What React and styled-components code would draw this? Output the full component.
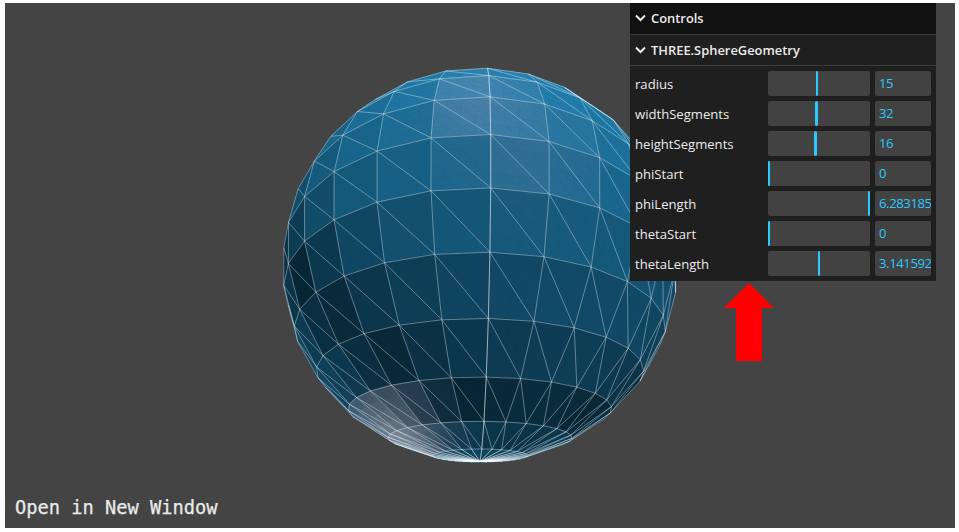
import React, { useMemo } from "react";
import styled, { createGlobalStyle } from "styled-components";

const Global = createGlobalStyle`
  html, body { margin: 0; padding: 0; background: #fff; }
  body { padding: 3px 0 0 5px; font-family: "Open Sans", "Noto Sans", sans-serif; }
`;

const Stage = styled.div`
  position: relative;
  width: 950px;
  height: 525px;
  background: #444444;
  overflow: hidden;
`;

const Canvas = styled.svg`
  display: block;
  width: 950px;
  height: 525px;
`;

const Panel = styled.div`
  position: absolute;
  top: 0;
  right: 19px;
  width: 306px;
  background: #1f1f1f;
  color: #ebebeb;
  font-family: "Open Sans", "Noto Sans", sans-serif;
  font-size: 13.1px;
`;

const TitleBar = styled.div`
  display: flex;
  align-items: center;
  gap: 5px;
  height: 30px;
  padding-left: 5px;
  padding-bottom: ${(p) => (p.$root ? "1px" : "0")};
  font-weight: 600;
  font-size: 12.9px;
  background: ${(p) => (p.$root ? "#111111" : "#1f1f1f")};
  border-bottom: 1px solid #3a3a3a;
`;

const Chevron = styled.svg`
  width: 11px;
  height: 8px;
  flex: none;
`;

const Rows = styled.div`
  display: flex;
  flex-direction: column;
  gap: 5px;
  padding: 5px;
`;

const Row = styled.div`
  display: grid;
  grid-template-columns: 128px 102px 56px;
  column-gap: 5px;
  height: 25px;
  align-items: center;
`;

const Label = styled.span`
  white-space: nowrap;
`;

const Track = styled.div`
  position: relative;
  height: 25px;
  background: #424242;
  border-radius: 2px;
`;

const Handle = styled.div`
  position: absolute;
  top: 0;
  bottom: 0;
  width: 2.5px;
  background: #2cc9ff;
  border-radius: 2px;
`;

const NumberBox = styled.div`
  height: 25px;
  line-height: 25px;
  padding-left: 4px;
  background: #424242;
  border-radius: 2px;
  color: #2cc9ff;
  letter-spacing: -0.4px;
  overflow: hidden;
  white-space: nowrap;
`;

const OpenLink = styled.div`
  position: absolute;
  left: 10px;
  bottom: 8px;
  font-family: "DejaVu Sans Mono", monospace;
  font-size: 18.7px;
  line-height: 24px;
  color: #ebebeb;
  -webkit-text-stroke: 0.25px #ebebeb;
`;

const Arrow = styled.svg`
  position: absolute;
  left: 719px;
  top: 280px;
  width: 50px;
  height: 78px;
`;

const TAU = Math.PI * 2;
const rows = [
  ["radius", 15, 1, 30],
  ["widthSegments", 32, 3, 64],
  ["heightSegments", 16, 2, 32],
  ["phiStart", 0, 0, TAU],
  ["phiLength", TAU, 0, TAU],
  ["thetaStart", 0, 0, TAU],
  ["thetaLength", Math.PI, 0, TAU],
];

const toLin = (c) => {
  const v = c / 255;
  return v <= 0.04045 ? v / 12.92 : Math.pow((v + 0.055) / 1.055, 2.4);
};
const toS = (v) => {
  const c = Math.min(1, Math.max(0, v));
  const s = c <= 0.0031308 ? c * 12.92 : 1.055 * Math.pow(c, 1 / 2.4) - 0.055;
  return Math.round(s * 255);
};
const norm = (v) => {
  const l = Math.hypot(v[0], v[1], v[2]);
  return [v[0] / l, v[1] / l, v[2] / l];
};
const dot = (a, b) => a[0] * b[0] + a[1] * b[1] + a[2] * b[2];

const BASE = [21, 98, 137].map(toLin);
const EMIT = [7, 37, 52].map(toLin);
const SPEC = toLin(17);
const LIGHTS = [[0, 200, 0], [100, 200, 100], [-100, -200, -100]].map(norm);
const CAM = [0, 0, 2];
const F = 342.1;
const CX = 475;
const CY = 262.5;
const RX = (-36 * Math.PI) / 180;
const RY = (92 * Math.PI) / 180;
const SUB = 4;

function shade(P, N) {
  const V = norm([CAM[0] - P[0], CAM[1] - P[1], CAM[2] - P[2]]);
  const out = [...EMIT];
  for (const L of LIGHTS) {
    const nl = Math.max(0, dot(N, L));
    if (nl <= 0) continue;
    const H = norm([L[0] + V[0], L[1] + V[1], L[2] + V[2]]);
    const nh = Math.max(0, dot(N, H));
    const vh = Math.max(0, dot(V, H));
    const fr = Math.pow(1 - vh, 5);
    const Fs = SPEC * (1 - fr) + fr;
    const spec = Fs * 0.25 * (1 / Math.PI) * 16 * Math.pow(nh, 30);
    for (let i = 0; i < 3; i++) out[i] += nl * 3 * (BASE[i] / Math.PI + spec);
  }
  return `rgb(${toS(out[0])},${toS(out[1])},${toS(out[2])})`;
}

function buildSphere() {
  const W = 32;
  const H = 16;
  const vert = (ix, iy) => {
    const th = (iy / H) * Math.PI;
    const ph = (ix / W) * TAU;
    const x = -Math.cos(ph) * Math.sin(th);
    const y = Math.cos(th);
    const z = Math.sin(ph) * Math.sin(th);
    const x1 = x * Math.cos(RY) + z * Math.sin(RY);
    const z1 = -x * Math.sin(RY) + z * Math.cos(RY);
    return [x1, y * Math.cos(RX) - z1 * Math.sin(RX), y * Math.sin(RX) + z1 * Math.cos(RX)];
  };
  const proj = (p) => [CX + (F * p[0]) / (2 - p[2]), CY - (F * p[1]) / (2 - p[2])];
  const polys = [];
  const edges = new Map();
  const addEdge = (a, b, pa, pb) => {
    const k = a < b ? `${a}|${b}` : `${b}|${a}`;
    if (!edges.has(k)) edges.set(k, [proj(pa), proj(pb)]);
  };
  const face = (ids) => {
    const [A, B, C] = ids.map(([ix, iy]) => vert(ix, iy));
    const u = [B[0] - A[0], B[1] - A[1], B[2] - A[2]];
    const v = [C[0] - A[0], C[1] - A[1], C[2] - A[2]];
    let N = norm([u[1] * v[2] - u[2] * v[1], u[2] * v[0] - u[0] * v[2], u[0] * v[1] - u[1] * v[0]]);
    const M = [(A[0] + B[0] + C[0]) / 3, (A[1] + B[1] + C[1]) / 3, (A[2] + B[2] + C[2]) / 3];
    if (dot(N, M) < 0) N = N.map((c) => -c);
    const view = [CAM[0] - M[0], CAM[1] - M[1], CAM[2] - M[2]];
    if (dot(N, view) <= 0) return;
    const names = ids.map(([ix, iy]) => (iy === 0 || iy === H ? `p${iy}_${ix}` : `${ix}_${iy}`));
    addEdge(names[0], names[1], A, B);
    addEdge(names[1], names[2], B, C);
    addEdge(names[2], names[0], C, A);
    const at = (i, j) => {
      const k = SUB - i - j;
      return [
        (A[0] * k + B[0] * i + C[0] * j) / SUB,
        (A[1] * k + B[1] * i + C[1] * j) / SUB,
        (A[2] * k + B[2] * i + C[2] * j) / SUB,
      ];
    };
    const sub = (p, q, r) => {
      const c = [(p[0] + q[0] + r[0]) / 3, (p[1] + q[1] + r[1]) / 3, (p[2] + q[2] + r[2]) / 3];
      const col = shade(c, N);
      polys.push({
        pts: [p, q, r].map((x) => proj(x).map((n) => n.toFixed(2)).join(",")).join(" "),
        col,
      });
    };
    for (let i = 0; i < SUB; i++) {
      for (let j = 0; j < SUB - i; j++) {
        sub(at(i, j), at(i + 1, j), at(i, j + 1));
        if (i + j < SUB - 1) sub(at(i + 1, j), at(i + 1, j + 1), at(i, j + 1));
      }
    }
  };
  for (let iy = 0; iy < H; iy++) {
    for (let ix = 0; ix < W; ix++) {
      const a = [ix + 1, iy];
      const b = [ix, iy];
      const c = [ix, iy + 1];
      const d = [ix + 1, iy + 1];
      if (iy !== 0) face([a, b, d]);
      if (iy !== H - 1) face([b, c, d]);
    }
  }
  return { polys, lines: [...edges.values()] };
}

function Sphere() {
  const { polys, lines } = useMemo(buildSphere, []);
  return (
    <Canvas viewBox="0 0 950 525">
      {polys.map((p, i) => (
        <polygon key={i} points={p.pts} fill={p.col} stroke={p.col} strokeWidth="0.5" />
      ))}
      {lines.map((l, i) => (
        <line
          key={i}
          x1={l[0][0]}
          y1={l[0][1]}
          x2={l[1][0]}
          y2={l[1][1]}
          stroke="#fff"
          strokeOpacity="0.4"
          strokeWidth="0.9"
        />
      ))}
    </Canvas>
  );
}

const Down = () => (
  <Chevron viewBox="0 0 11 8">
    <path d="M1 1.5 L5.5 6 L10 1.5" fill="none" stroke="#ebebeb" strokeWidth="2" />
  </Chevron>
);

export default function App() {
  return (
    <>
      <Global />
      <Stage>
        <Sphere />
        <Panel>
          <TitleBar $root>
            <Down />
            Controls
          </TitleBar>
          <TitleBar>
            <Down />
            THREE.SphereGeometry
          </TitleBar>
          <Rows>
            {rows.map(([name, value, min, max]) => (
              <Row key={name}>
                <Label>{name}</Label>
                <Track>
                  <Handle style={{ left: `${((value - min) / (max - min)) * 99.9 - 0.4}px` }} />
                </Track>
                <NumberBox>{value}</NumberBox>
              </Row>
            ))}
          </Rows>
        </Panel>
        <Arrow viewBox="0 0 50 78">
          <polygon points="25,0 50,25 38,25 38,78 12,78 12,25 0,25" fill="#ff0000" />
        </Arrow>
        <OpenLink>Open in New Window</OpenLink>
      </Stage>
    </>
  );
}
